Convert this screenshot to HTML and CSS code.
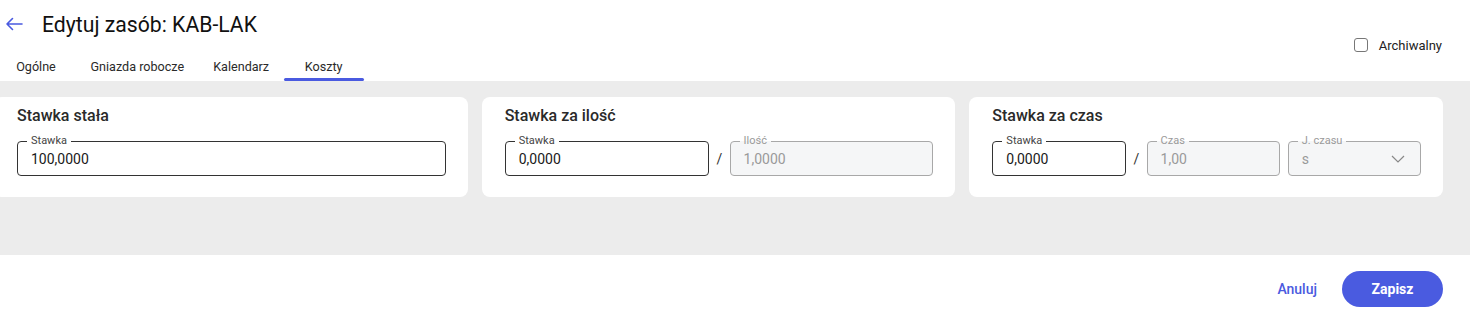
FILE: index.html
```html
<!DOCTYPE html>
<html lang="pl">
<head>
    <meta charset="UTF-8">
    <title>Edytuj zasób: KAB-LAK</title>
    <link rel="stylesheet" href="styles.css">
</head>
<body>
<div class="page">
    <header class="top">
        <div class="top-left">
            <div class="title-row">
                <span class="back">
                    <svg width="18" height="14" viewBox="0 0 18 14"><path d="M17 7H2M7.5 1.5 2 7l5.5 5.5" fill="none" stroke="currentColor" stroke-width="1.6" stroke-linecap="round" stroke-linejoin="round"/></svg>
                </span>
                <h1>Edytuj zasób: KAB-LAK</h1>
            </div>
            <ul class="tabs">
                <li>Ogólne</li>
                <li>Gniazda robocze</li>
                <li>Kalendarz</li>
                <li class="current">Koszty</li>
            </ul>
        </div>
        <label class="check"><span class="box"></span>Archiwalny</label>
    </header>

    <div class="content">
        <div class="cards">
            <div class="card">
                <h2>Stawka stała</h2>
                <div class="row">
                    <div class="field">
                        <span class="label">Stawka</span>
                        <span class="value">100,0000</span>
                    </div>
                </div>
            </div>
            <div class="card">
                <h2>Stawka za ilość</h2>
                <div class="row">
                    <div class="field">
                        <span class="label">Stawka</span>
                        <span class="value">0,0000</span>
                    </div>
                    <span class="slash">/</span>
                    <div class="field disabled">
                        <span class="label">Ilość</span>
                        <span class="value">1,0000</span>
                    </div>
                </div>
            </div>
            <div class="card">
                <h2>Stawka za czas</h2>
                <div class="row">
                    <div class="field">
                        <span class="label">Stawka</span>
                        <span class="value">0,0000</span>
                    </div>
                    <span class="slash">/</span>
                    <div class="field disabled">
                        <span class="label">Czas</span>
                        <span class="value">1,00</span>
                    </div>
                    <div class="field disabled select">
                        <span class="label">J. czasu</span>
                        <span class="value">s</span>
                        <svg class="chev" width="14" height="8" viewBox="0 0 14 8"><path d="M1 1l6 6 6-6" fill="none" stroke="currentColor" stroke-width="1.2"/></svg>
                    </div>
                </div>
            </div>
        </div>
    </div>

    <div class="actions">
        <span class="cancel">Anuluj</span>
        <span class="save">Zapisz</span>
    </div>
</div>
</body>
</html>
```

FILE: styles.css
```css
* {
    padding: 0;
    margin: 0;
    list-style: none;
    box-sizing: border-box;
}

body {
    font-family: Roboto, "Noto Sans", sans-serif;
    color: #212121;
    background: #fff;
}

.top {
    display: flex;
    justify-content: space-between;
}

.title-row {
    height: 48px;
    display: flex;
    align-items: center;
}

.back {
    color: #4a5ae0;
    width: 42px;
    padding-left: 5px;
    display: flex;
}

h1 {
    font-size: 21.2px;
    font-weight: 400;
    color: #111;
}

.tabs {
    display: flex;
    margin-left: -4px;
}

.tabs li {
    position: relative;
    min-width: 80px;
    padding: 11px 14.5px 6px;
    line-height: 16px;
    font-size: 12.6px;
    text-align: center;
    color: #2a2a2a;
}

.tabs li.current:after {
    content: '';
    position: absolute;
    left: 0;
    right: 0;
    bottom: 0;
    height: 3px;
    border-radius: 2px;
    background: #4a5ae0;
}

.check {
    display: flex;
    align-items: center;
    height: 16px;
    margin: 37px 28px 0 0;
    font-size: 13px;
    color: #222;
}

.check .box {
    width: 14px;
    height: 14px;
    border: 1.5px solid #777;
    border-radius: 3px;
    margin-right: 11px;
}

.content {
    background: #ececec;
    height: 174px;
    padding: 16px 27px 0 0;
}

.cards {
    display: flex;
    gap: 14px;
    margin-left: -6px;
}

.card {
    flex: 1;
    background: #fff;
    border-radius: 8px;
    padding: 9px 22px 21px 23px;
}

.card h2 {
    font-size: 16px;
    font-weight: 500;
    line-height: 20px;
    color: #2a2a2a;
    margin-bottom: 15px;
}

.row {
    display: flex;
    align-items: center;
    gap: 8px;
}

.field {
    flex: 1;
    position: relative;
    height: 35px;
    border: 1px solid #333;
    border-radius: 4px;
    padding-left: 13px;
    display: flex;
    align-items: center;
    background: #fff;
}

.field .label {
    position: absolute;
    top: -8px;
    left: 9px;
    padding: 0 4px;
    font-size: 11px;
    line-height: 14px;
    color: #444;
    background: #fff;
}

.field .value {
    font-size: 14px;
    color: #1a1a1a;
}

.field.disabled {
    border-color: #a8a8a8;
    background: #f5f6f7;
}

.field.disabled .label {
    color: #9a9a9a;
    background: linear-gradient(#fff 50%, #f5f6f7 50%);
}

.field.disabled .value {
    color: #9a9a9a;
}

.field.select .chev {
    position: absolute;
    right: 15px;
    top: 13px;
    color: #888;
}

.slash {
    width: 5px;
    font-size: 14px;
    color: #333;
}

.actions {
    display: flex;
    justify-content: flex-end;
    align-items: center;
    gap: 25px;
    padding: 16px 27px 0 0;
}

.cancel {
    color: #4a5ae0;
    font-size: 14px;
    font-weight: 500;
}

.save {
    width: 101px;
    height: 36px;
    line-height: 36px;
    border-radius: 18px;
    background: #4a5be0;
    color: #fff;
    text-align: center;
    font-size: 14px;
    font-weight: 700;
}
```
